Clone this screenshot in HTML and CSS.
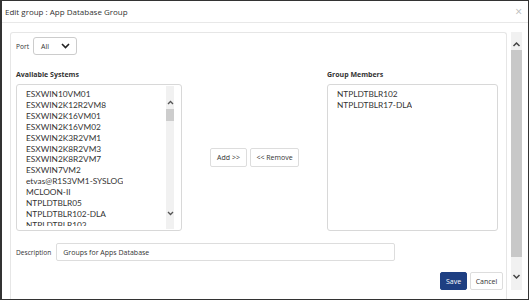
FILE: index.html
```html
<!DOCTYPE html>
<html lang="en">
<head>
  <meta charset="UTF-8" />
  <title>Edit group</title>
  <meta name="viewport" content="width=device-width, initial-scale=1" />
  <link rel="stylesheet" href="styles.css">
</head>
<body>
  <div class="modal">
    <div class="modal-header">
      <span class="modal-title">Edit group : App Database Group</span>
      <span class="close">&times;</span>
    </div>

    <div class="modal-body">
      <div class="panel">
        <div class="port-row">
          <label class="field-label">Port</label>
          <div class="select">
            <span>All</span>
            <svg width="9" height="6" viewBox="0 0 9 6"><path d="M1 1l3.5 3.5L8 1" fill="none" stroke="#222" stroke-width="1.6"/></svg>
          </div>
        </div>

        <div class="columns">
          <div class="col">
            <div class="col-title">Available Systems</div>
            <div class="listbox">
              <ul class="items">
                <li>ESXWIN10VM01</li>
                <li>ESXWIN2K12R2VM8</li>
                <li>ESXWIN2K16VM01</li>
                <li>ESXWIN2K16VM02</li>
                <li>ESXWIN2K3R2VM1</li>
                <li>ESXWIN2K8R2VM3</li>
                <li>ESXWIN2K8R2VM7</li>
                <li>ESXWIN7VM2</li>
                <li>etvas@R1S3VM1-SYSLOG</li>
                <li>MCLOON-II</li>
                <li>NTPLDTBLR05</li>
                <li>NTPLDTBLR102-DLA</li>
                <li>NTPLDTBLR103</li>
              </ul>
              <div class="mini-scroll">
                <svg class="arrow" width="7" height="5" viewBox="0 0 7 5"><path d="M1 4l2.5-2.5L6 4" fill="none" stroke="#555" stroke-width="1.3"/></svg>
                <div class="mini-track"><div class="mini-thumb"></div></div>
                <svg class="arrow" width="7" height="5" viewBox="0 0 7 5"><path d="M1 1l2.5 2.5L6 1" fill="none" stroke="#555" stroke-width="1.3"/></svg>
              </div>
            </div>
          </div>

          <div class="move-btns">
            <button class="btn">Add &gt;&gt;</button>
            <button class="btn">&lt;&lt; Remove</button>
          </div>

          <div class="col">
            <div class="col-title">Group Members</div>
            <div class="listbox">
              <ul class="items">
                <li>NTPLDTBLR102</li>
                <li>NTPLDTBLR17-DLA</li>
              </ul>
            </div>
          </div>
        </div>

        <div class="desc-row">
          <label class="field-label">Description</label>
          <input class="text-input" value="Groups for Apps Database" />
        </div>

        <div class="footer">
          <button class="btn btn-primary">Save</button>
          <button class="btn">Cancel</button>
        </div>
      </div>

      <div class="scrollbar">
        <svg class="arrow" width="9" height="6" viewBox="0 0 9 6"><path d="M1.5 5L4.5 2l3 3" fill="none" stroke="#444" stroke-width="1.5"/></svg>
        <div class="thumb"></div>
        <svg class="arrow" width="9" height="6" viewBox="0 0 9 6"><path d="M1.5 1l3 3 3-3" fill="none" stroke="#444" stroke-width="1.5"/></svg>
      </div>
    </div>
  </div>
</body>
</html>
```

FILE: styles.css
```css
* {
  box-sizing: border-box;
}

body {
  margin: 0;
  background: white;
  font-family: "Open Sans", Arial, sans-serif;
  color: #333;
}

.modal {
  width: 529px;
  height: 300px;
  border: 1px solid #333;
  border-left-width: 2px;
  overflow: hidden;
  display: flex;
  flex-direction: column;
}

.modal-header {
  height: 22px;
  flex-shrink: 0;
  display: flex;
  align-items: center;
  justify-content: space-between;
  padding: 0 6px 0 3px;
  border-bottom: 1px solid #e8e8e8;
}

.modal-title {
  font-size: 8px;
  color: #333;
}

.close {
  font-size: 12px;
  color: #bbb;
  line-height: 1;
}

.modal-body {
  flex: 1;
  display: flex;
  padding: 9px 5px 0 8px;
  overflow: hidden;
}

.panel {
  width: 497px;
  border: 1px solid #e6e6e6;
  border-bottom: none;
  border-radius: 3px 3px 0 0;
  padding: 4px 8px 0 5px;
}

.port-row {
  display: flex;
  align-items: center;
  gap: 4px;
}

.field-label {
  font-size: 6.6px;
  color: #333;
}

.select {
  width: 44px;
  height: 18px;
  border: 1px solid #ccc;
  border-radius: 3px;
  display: flex;
  align-items: center;
  justify-content: space-between;
  padding: 0 6px 0 7px;
  font-size: 7px;
  color: #333;
}

.columns {
  display: grid;
  grid-template-columns: 166px 1fr 171px;
  margin-top: 14px;
}

.col-title {
  font-size: 7px;
  font-weight: bold;
  color: #333;
  height: 15px;
  line-height: 11px;
}

.listbox {
  height: 147px;
  border: 1px solid #d8d8d8;
  border-radius: 3px;
  display: flex;
  justify-content: space-between;
  overflow: hidden;
}

.items {
  list-style: none;
  margin: 0;
  padding: 4px 0 0 9px;
  height: 141px;
  overflow: hidden;
  font-family: "Lato", "Open Sans", sans-serif;
  font-size: 8.3px;
  line-height: 10.9px;
  color: #333;
}

.mini-scroll {
  width: 8px;
  margin: 1px 7px 1px 0;
  background: #f1f1f1;
  display: flex;
  flex-direction: column;
  align-items: center;
}

.mini-scroll .arrow {
  flex-shrink: 0;
  margin: 14px 0 4px;
}

.mini-scroll .arrow:last-child {
  margin: 3px 0 13px;
}

.mini-track {
  flex: 1;
  width: 100%;
}

.mini-thumb {
  height: 12px;
  background: #cdcdcd;
}

.move-btns {
  display: flex;
  align-items: center;
  justify-content: center;
  gap: 3px;
  padding-top: 15px;
}

.btn {
  font-family: "Open Sans", Arial, sans-serif;
  font-size: 7px;
  color: #333;
  background: white;
  border: 1px solid #ddd;
  border-radius: 2px;
  height: 19px;
  padding: 0;
  white-space: nowrap;
}

.move-btns .btn:first-child {
  width: 37px;
}

.move-btns .btn:last-child {
  width: 49px;
}

.desc-row {
  display: flex;
  align-items: center;
  gap: 5px;
  margin-top: 12px;
}

.text-input {
  width: 339px;
  height: 18px;
  border: 1px solid #ddd;
  border-radius: 2px;
  padding: 0 6px;
  font-family: "Open Sans", Arial, sans-serif;
  font-size: 7px;
  color: #333;
}

.footer {
  display: flex;
  justify-content: flex-end;
  gap: 3px;
  margin-top: 11px;
  margin-right: -5px;
}

.footer .btn {
  height: 18px;
}

.btn-primary {
  width: 27px;
  background: #1e3f82;
  border-color: #1e3f82;
  color: white;
}

.footer .btn:last-child {
  width: 33px;
}

.scrollbar {
  width: 11px;
  height: 258px;
  margin-left: 4px;
  background: #f1f1f1;
  display: flex;
  flex-direction: column;
  align-items: center;
}

.scrollbar .arrow {
  flex-shrink: 0;
  margin: 9px 0 3px;
}

.scrollbar .arrow:last-child {
  margin: 17px 0 10px;
}

.scrollbar .thumb {
  flex: 1;
  width: 100%;
  background: #c8c8c8;
}
```
